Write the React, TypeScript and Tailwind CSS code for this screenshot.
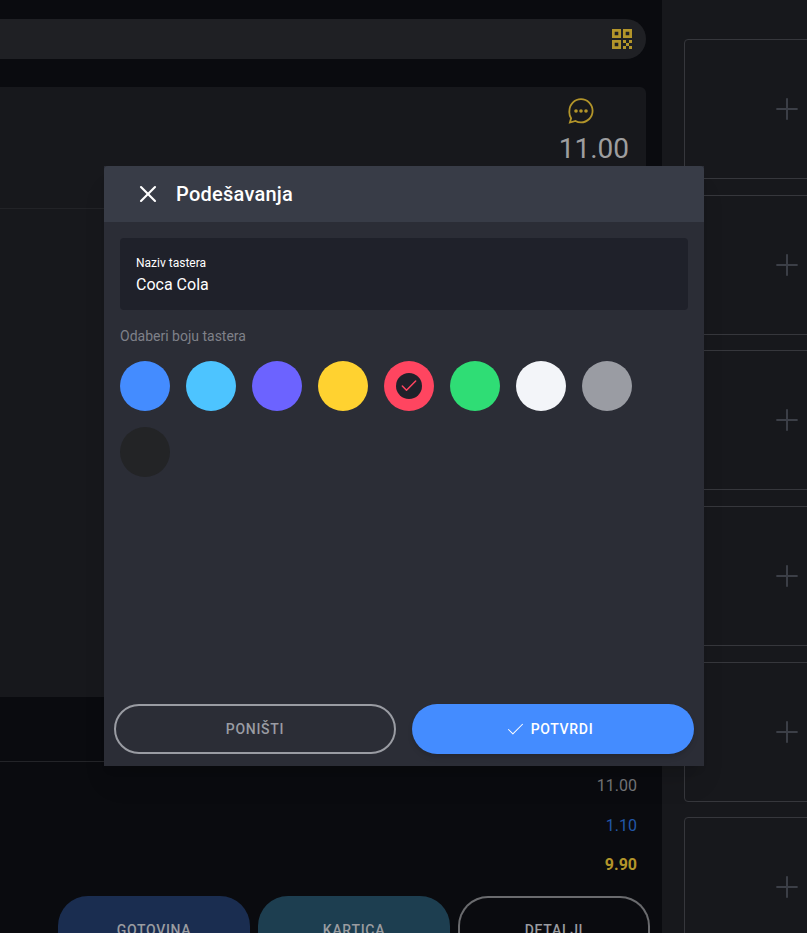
import { Check, Plus, X } from "lucide-react";

const swatches = ["#448cff", "#4dc4ff", "#6c63ff", "#ffd230", "#ff4560", "#2fdd75", "#f3f5f9", "#9a9ca3", "#232426"];

function QrIcon() {
  return (
    <svg width="20" height="20" viewBox="0 0 20 20" fill="#b3952a">
      <path fillRule="evenodd" d="M0 0h9v9H0zM2.7 2.7v3.6h3.6V2.7zM11 0h9v9h-9zM13.7 2.7v3.6h3.6V2.7zM0 11h9v9H0zM2.7 13.7v3.6h3.6v-3.6z" />
      <path d="M11 11h3v3h-3zM17 11h3v3h-3zM14 14h3v3h-3zM11 17h3v3h-3zM17 17h3v3h-3z" />
    </svg>
  );
}

function ChatIcon() {
  return (
    <svg width="26" height="26" viewBox="0 0 26 26" fill="none" stroke="#b3952a" strokeWidth="1.8">
      <path d="M13 1.2c6.4 0 11.6 5.2 11.6 11.6S19.4 24.4 13 24.4c-2 0-3.9-.5-5.5-1.4l-5.6 1.5 1.2-4.2A11.5 11.5 0 0 1 1.4 12.8C1.4 6.4 6.6 1.2 13 1.2z" />
      <circle cx="8" cy="13" r="1.8" fill="#b3952a" stroke="none" />
      <circle cx="13" cy="13" r="1.8" fill="#b3952a" stroke="none" />
      <circle cx="18" cy="13" r="1.8" fill="#b3952a" stroke="none" />
    </svg>
  );
}

export default function App() {
  return (
    <div
      className="relative flex h-[933px] w-[807px] overflow-hidden bg-[#0a0b0f]"
      style={{ fontFamily: "Roboto, 'Liberation Sans', sans-serif" }}
    >
      <main className="flex w-[662px] shrink-0 flex-col pt-[19px] pr-4">
        <div className="flex h-10 shrink-0 items-center justify-end rounded-r-[20px] bg-[#1f2024] pr-[14px]">
          <QrIcon />
        </div>
        <section className="mt-7 h-[610px] shrink-0 rounded-r-md bg-[#17181c]">
          <div className="flex h-[122px] flex-col items-end border-b border-[#222327] pr-[17px] pt-[11px]">
            <div className="mr-[35px]"><ChatIcon /></div>
            <div className="mt-[9px] text-[28px] leading-8 text-[#9e9e9f]">11.00</div>
          </div>
        </section>
        <div className="h-[65px] shrink-0 border-b border-[#232428]" />
        <div className="flex shrink-0 flex-col items-end pr-[9px] pt-[14px] text-base leading-5">
          <div className="text-[#76777a]">11.00</div>
          <div className="mt-5 text-[#2257a8]">1.10</div>
          <div className="mt-[19px] font-bold text-[#b3952a]">9.90</div>
        </div>
        <div className="mt-[21px] flex shrink-0 gap-2 pl-[58px]">
          <div className="flex h-[60px] w-[192px] shrink-0 justify-center rounded-t-[30px] bg-[#1a2d50] pt-6 text-sm font-medium tracking-wider text-[#9a9ca0]">GOTOVINA</div>
          <div className="flex h-[60px] w-[192px] shrink-0 justify-center rounded-t-[30px] bg-[#1d3e50] pt-6 text-sm font-medium tracking-wider text-[#9a9ca0]">KARTICA</div>
          <div className="flex h-[60px] w-[192px] shrink-0 justify-center rounded-t-[30px] border-2 border-b-0 border-[#6a6b6e] pt-[22px] text-sm font-medium tracking-wider text-[#9a9ca0]">DETALJI</div>
        </div>
      </main>

      <aside className="flex min-w-0 flex-1 flex-col gap-[15.65px] bg-[#17181c] pl-[22px] pt-[39px]">
        {[0, 1, 2, 3, 4, 5].map((i) => (
          <div key={i} className="flex h-[140px] w-[206px] shrink-0 items-center justify-center rounded border border-[#36373c]">
            <Plus size={34} strokeWidth={1.4} className="text-[#3c3f47]" />
          </div>
        ))}
      </aside>

      <div className="absolute left-[104px] top-[166px] flex h-[600px] w-[600px] flex-col bg-[#2b2d36] shadow-xl">
        <header className="flex h-14 shrink-0 items-center rounded-t-sm bg-[#383c47] pl-[30px]">
          <X size={28} strokeWidth={1.8} className="text-white" />
          <h2 className="ml-[14px] text-xl font-medium tracking-[0.25px] text-white">Podešavanja</h2>
        </header>
        <div className="flex flex-1 flex-col px-4 pt-4">
          <div className="flex h-[72px] flex-col justify-center rounded-sm bg-[#1f212a] px-4 pt-[2px] text-white">
            <div className="-mt-[1px] text-xs leading-4">Naziv tastera</div>
            <div className="mt-1 text-base leading-5">Coca Cola</div>
          </div>
          <p className="mt-4 text-sm leading-5 text-[#7f8189]">Odaberi boju tastera</p>
          <div className="mt-[15px] flex flex-wrap gap-4">
            {swatches.map((c, i) => (
              <div key={c} className="flex h-[50px] w-[50px] items-center justify-center rounded-full" style={{ backgroundColor: c }}>
                {i === 4 && (
                  <div className="flex h-[26px] w-[26px] items-center justify-center rounded-full bg-[#1f212a]">
                    <Check size={20} strokeWidth={1.8} className="text-[#ff4560]" />
                  </div>
                )}
              </div>
            ))}
          </div>
        </div>
        <footer className="flex gap-4 px-[10px] pb-3">
          <button className="h-[50px] w-[282px] rounded-[25px] border-2 border-[#9a9ca3] text-sm font-medium tracking-wider text-[#9a9ca3]">PONIŠTI</button>
          <button className="flex h-[50px] w-[282px] items-center justify-center gap-[5px] rounded-[25px] bg-[#448cff] pr-2 text-sm font-medium tracking-wider text-white shadow-md">
            <Check size={21} strokeWidth={1.2} />
            POTVRDI
          </button>
        </footer>
      </div>
    </div>
  );
}
